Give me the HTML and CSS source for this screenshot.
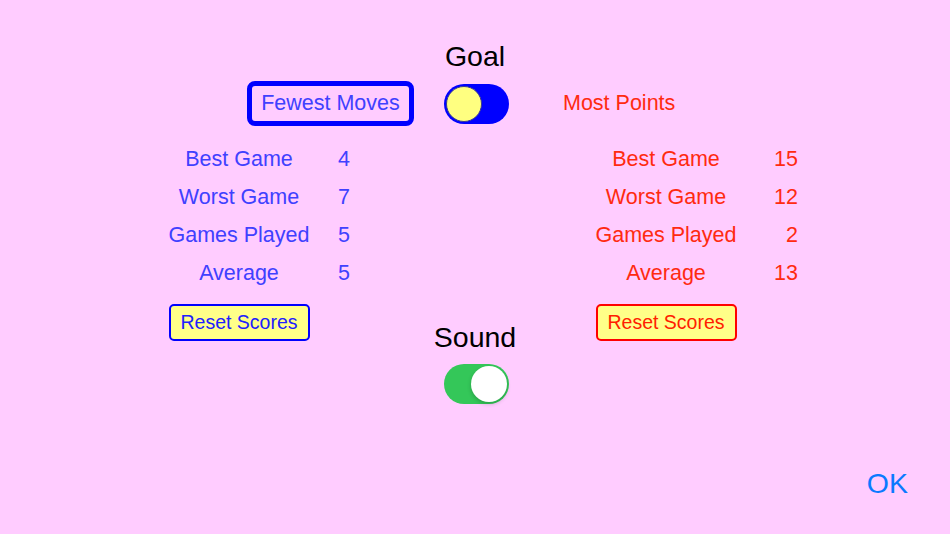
FILE: index.html
```html
<!DOCTYPE html>
<html lang="en">
<head>
  <meta charset="UTF-8" />
  <meta name="viewport" content="width=device-width, initial-scale=1.0"/>
  <title>Settings</title>
  <link rel="stylesheet" href="styles.css">
</head>
<body>
  <main class="screen">
    <h1 class="title">Goal</h1>

    <div class="goal-row">
      <button class="goal-btn">Fewest Moves</button>
      <span class="switch switch-goal"><span class="knob"></span></span>
      <span class="goal-alt">Most Points</span>
    </div>

    <div class="stats">
      <span class="label moves">Best Game</span>
      <span class="value moves">4</span>
      <span class="label points">Best Game</span>
      <span class="value points">15</span>

      <span class="label moves">Worst Game</span>
      <span class="value moves">7</span>
      <span class="label points">Worst Game</span>
      <span class="value points">12</span>

      <span class="label moves">Games Played</span>
      <span class="value moves">5</span>
      <span class="label points">Games Played</span>
      <span class="value points">2</span>

      <span class="label moves">Average</span>
      <span class="value moves">5</span>
      <span class="label points">Average</span>
      <span class="value points">13</span>
    </div>

    <div class="actions">
      <button class="reset reset-moves">Reset Scores</button>
      <div class="sound">
        <h2 class="title">Sound</h2>
        <span class="switch switch-sound"><span class="knob"></span></span>
      </div>
      <button class="reset reset-points">Reset Scores</button>
    </div>

    <div class="footer">
      <a class="ok" href="#">OK</a>
    </div>
  </main>
</body>
</html>
```

FILE: styles.css
```css
body {
  margin: 0;
  background-color: #ffccff;
  font-family: 'Liberation Sans', Arial, sans-serif;
  color: #000;
}
.screen {
  width: 950px;
  height: 534px;
  padding-top: 39px;
  box-sizing: border-box;
}
.title {
  margin: 0;
  font-size: 28.5px;
  font-weight: normal;
  line-height: 34px;
  text-align: center;
}

/* goal selector */
.goal-row {
  display: flex;
  align-items: center;
  margin-top: 8px;
  padding-left: 247px;
}
.goal-btn {
  width: 167px;
  height: 45px;
  border: 5px solid #0000ff;
  border-radius: 8px;
  background: transparent;
  color: #4040ff;
  font-family: inherit;
  font-size: 21.5px;
  padding: 0;
}
.goal-alt {
  margin-left: 54px;
  color: #ff2a10;
  font-size: 21.5px;
}
.switch {
  position: relative;
  display: block;
  width: 65px;
  height: 40px;
  border-radius: 20px;
}
.switch .knob {
  position: absolute;
  top: 2px;
  width: 36px;
  height: 36px;
  border-radius: 50%;
  box-sizing: border-box;
}
.switch-goal {
  margin-left: 30px;
  background: #0000ff;
}
.switch-goal .knob {
  left: 2px;
  background: #ffff80;
  border: 1px solid #3a3a90;
}
.switch-sound {
  margin: 10px auto 0;
  background: #34c759;
}
.switch-sound .knob {
  right: 2px;
  background: #fff;
  box-shadow: 0 2px 4px rgba(0, 0, 0, 0.2);
}

/* score table */
.stats {
  display: grid;
  grid-template-columns: 160px 31px 236px 160px 52px;
  grid-auto-rows: 38px;
  align-items: center;
  margin-top: 14px;
  padding-left: 159px;
  font-size: 21.5px;
}
.label { text-align: center; }
.value { text-align: right; }
.label.moves { grid-column: 1; }
.value.moves { grid-column: 2; }
.label.points { grid-column: 4; }
.value.points { grid-column: 5; }
.moves { color: #4040ff; }
.points { color: #ff2a10; }

/* bottom buttons */
.actions {
  display: grid;
  grid-template-columns: 159px 160px 267px 160px 1fr;
  align-items: start;
  margin-top: 12px;
}
.reset {
  grid-row: 1;
  justify-self: center;
  width: 141px;
  height: 37px;
  padding: 0;
  border-radius: 5px;
  background: #ffff88;
  font-family: inherit;
  font-size: 19.5px;
}
.reset-moves {
  grid-column: 2;
  border: 2.5px solid #0000ff;
  color: #2020ff;
}
.reset-points {
  grid-column: 4;
  border: 2.5px solid #ff0000;
  color: #ff2000;
}
.sound {
  grid-row: 1;
  grid-column: 1 / -1;
  justify-self: center;
  margin-top: 16px;
}
.sound .switch {
  left: 2px;
}

.footer {
  margin-top: 62px;
  padding-right: 42px;
  text-align: right;
  line-height: 34px;
}
.ok {
  color: #0a7aff;
  font-size: 28.5px;
  text-decoration: none;
}
```
